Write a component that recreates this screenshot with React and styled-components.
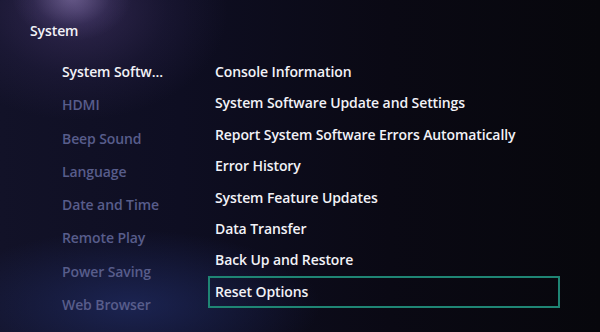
import React from "react";
import styled, { createGlobalStyle } from "styled-components";

const Global = createGlobalStyle`
  html, body { margin: 0; padding: 0; background: #07070d; }
  * { box-sizing: border-box; }
`;

const Screen = styled.div`
  width: 600px;
  height: 332px;
  overflow: hidden;
  font-family: "Open Sans", "Noto Sans", sans-serif;
  font-weight: 600;
  background:
    radial-gradient(ellipse 60px 45px at 72px -4px, rgba(175,155,215,0.45), rgba(130,110,180,0.12) 65%, transparent 100%),
    radial-gradient(ellipse 150px 110px at 78px 10px, rgba(80,62,120,0.5), rgba(60,48,100,0.2) 60%, transparent 100%),
    radial-gradient(ellipse 190px 75px at 130px 305px, rgba(32,44,100,0.7), transparent 100%),
    linear-gradient(90deg, #121228 0%, #0e0e22 30%, #0a0914 65%, #07070c 100%);
  padding: 22px 0 0 30px;
`;

const Header = styled.h1`
  margin: 0;
  font-size: 14px;
  font-weight: 600;
  color: #f2f2f7;
  line-height: 18px;
  letter-spacing: -0.1px;
`;

const Columns = styled.div`
  display: grid;
  grid-template-columns: 146px 352px;
  margin-top: 15px;
  padding-left: 32px;
`;

const LeftList = styled.ul`
  list-style: none;
  margin: 0;
  padding: 0;
`;

const LeftItem = styled.li`
  height: 33.3px;
  line-height: 33.3px;
  font-size: 14px;
  color: ${(p) => (p.$active ? "#f2f2f7" : "#585d8b")};
  white-space: nowrap;
  letter-spacing: -0.1px;
`;

const RightList = styled.ul`
  list-style: none;
  margin: 0;
  padding: 0;
  margin-top: 0.9px;
`;

const RightItem = styled.li`
  display: flex;
  align-items: center;
  padding-left: ${(p) => (p.$selected ? "5px" : "7px")};
  font-size: 14px;
  color: #f2f2f7;
  white-space: nowrap;
  letter-spacing: -0.1px;
  border: ${(p) => (p.$selected ? "2px solid #1f8574" : "none")};
  height: ${(p) => (p.$selected ? "32px" : "31.4px")};
`;

const left = [
  "System Softw...",
  "HDMI",
  "Beep Sound",
  "Language",
  "Date and Time",
  "Remote Play",
  "Power Saving",
  "Web Browser",
];

const right = [
  "Console Information",
  "System Software Update and Settings",
  "Report System Software Errors Automatically",
  "Error History",
  "System Feature Updates",
  "Data Transfer",
  "Back Up and Restore",
  "Reset Options",
];

export default function App() {
  return (
    <>
      <Global />
      <Screen>
        <Header>System</Header>
        <Columns>
          <LeftList>
            {left.map((t, i) => (
              <LeftItem key={t} $active={i === 0}>
                {t}
              </LeftItem>
            ))}
          </LeftList>
          <RightList>
            {right.map((t, i) => (
              <RightItem key={t} $selected={i === right.length - 1}>
                {t}
              </RightItem>
            ))}
          </RightList>
        </Columns>
      </Screen>
    </>
  );
}
